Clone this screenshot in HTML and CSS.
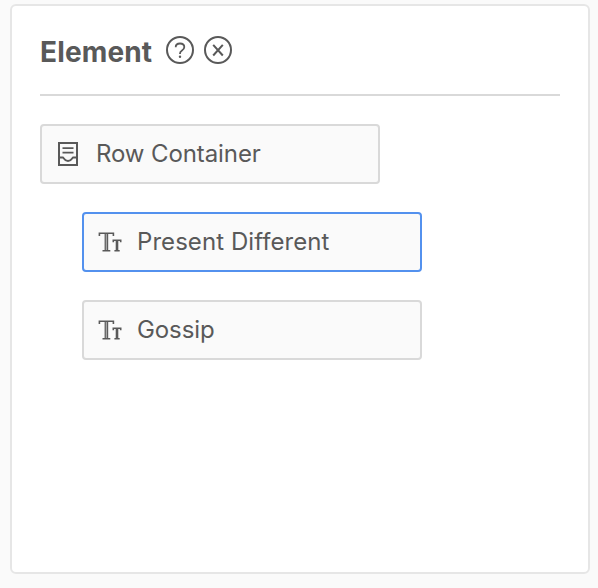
FILE: index.html
```html
<!DOCTYPE html>
<html lang="en">
<head>
<meta charset="utf-8">
<title>Element</title>
<link rel="stylesheet" href="styles.css">
</head>
<body>
<main class="panel">
  <header class="panel-header">
    <h1 class="panel-title"><span>Element</span></h1>
    <svg class="round-icon" viewBox="0 0 28 28" role="img" aria-label="Help">
      <circle cx="14" cy="14" r="13" stroke-width="2"/>
      <path d="M9.700 11.200C9.700 8.900 11.500 7.500 14 7.500c2.400 0 4.300 1.400 4.300 3.600 0 1.700-1 2.600-2.300 3.400-1.300.8-2 1.500-2 3v.6" stroke-width="1.800"/>
      <circle class="dot" cx="14" cy="20.800" r="1.200"/>
    </svg>
    <svg class="round-icon" viewBox="0 0 28 28" role="img" aria-label="Close">
      <circle cx="14" cy="14" r="13" stroke-width="2"/>
      <path d="M9.200 8.800l9.600 10.700M18.800 8.800l-9.600 10.700" stroke-width="2"/>
    </svg>
  </header>
  <ul class="tree">
    <li class="node">
      <svg class="node-icon" viewBox="0 0 24 24">
        <path d="M3 1h18v22H3z" stroke-width="2"/>
        <path d="M6.500 6.200h11M6.500 10.700h11" stroke-width="1.800"/>
        <path d="M3 15.500h3.800c1.200 0 1.200 3.500 5.200 3.500s4-3.500 5.200-3.500H21" stroke-width="1.800"/>
      </svg>
      <span class="label">Row Container</span>
    </li>
    <li class="node child selected">
      <svg class="node-icon" viewBox="0 0 24 24">
        <path d="M1.400 6V3.200h14V6M4.500 20.700h7.800M15.300 12.300v-2.100h7.400v2.100M16.400 20.700h5.300" stroke-width="1.600"/>
        <path d="M8.400 3v17.500" stroke-width="3.600"/>
        <path d="M19 10v10.500" stroke-width="2.600"/>
        <path class="core" d="M8.400 4v16" stroke-width="1.300"/>
      </svg>
      <span class="label">Present Different</span>
    </li>
    <li class="node child">
      <svg class="node-icon" viewBox="0 0 24 24">
        <path d="M1.400 6V3.200h14V6M4.500 20.700h7.800M15.300 12.300v-2.100h7.400v2.100M16.400 20.700h5.300" stroke-width="1.600"/>
        <path d="M8.400 3v17.500" stroke-width="3.600"/>
        <path d="M19 10v10.500" stroke-width="2.600"/>
        <path class="core" d="M8.400 4v16" stroke-width="1.300"/>
      </svg>
      <span class="label">Gossip</span>
    </li>
  </ul>
</main>
</body>
</html>
```

FILE: styles.css
```css
* { box-sizing: border-box; }

body {
  margin: 0;
  padding: 4px 8px 14px 10px;
  height: 588px;
  background: #fafafa;
  color: #595959;
  font-family: Inter, "Liberation Sans", sans-serif;
}

.panel {
  width: 580px;
  height: 570px;
  padding: 28px;
  background: #fff;
  border: 2px solid #e6e6e6;
  border-radius: 6px;
}

.panel-header {
  display: flex;
  gap: 10px;
  height: 62px;
  padding-top: 2px;
  border-bottom: 2px solid #d9d9d9;
}

.panel-title {
  width: 116px;
  margin: 0;
  font-size: 28px;
  font-weight: 700;
  line-height: 32px;
  letter-spacing: 0.15px;
}

.round-icon {
  width: 28px;
  height: 28px;
}

.round-icon,
.node-icon {
  flex: none;
  fill: none;
  stroke: #595959;
}

.round-icon .dot {
  fill: #595959;
  stroke: none;
}

.node-icon .core {
  stroke: #a6a6a6;
}

.tree {
  display: flex;
  flex-direction: column;
  gap: 28px;
  margin: 28px 0 0;
  padding: 0;
  list-style: none;
}

.node {
  display: flex;
  align-items: center;
  gap: 16px;
  width: 340px;
  height: 60px;
  padding: 0 14px;
  background: #fafafa;
  border: 2px solid #d9d9d9;
  border-radius: 4px;
}

.child {
  gap: 15px;
  margin-left: 42px;
}

.selected {
  border-color: #5391ee;
}

.node-icon {
  width: 24px;
  height: 24px;
}

.label {
  font-size: 24px;
  line-height: 32px;
  letter-spacing: -0.1px;
  white-space: nowrap;
}

.selected .label {
  letter-spacing: 0.06px;
}
```
